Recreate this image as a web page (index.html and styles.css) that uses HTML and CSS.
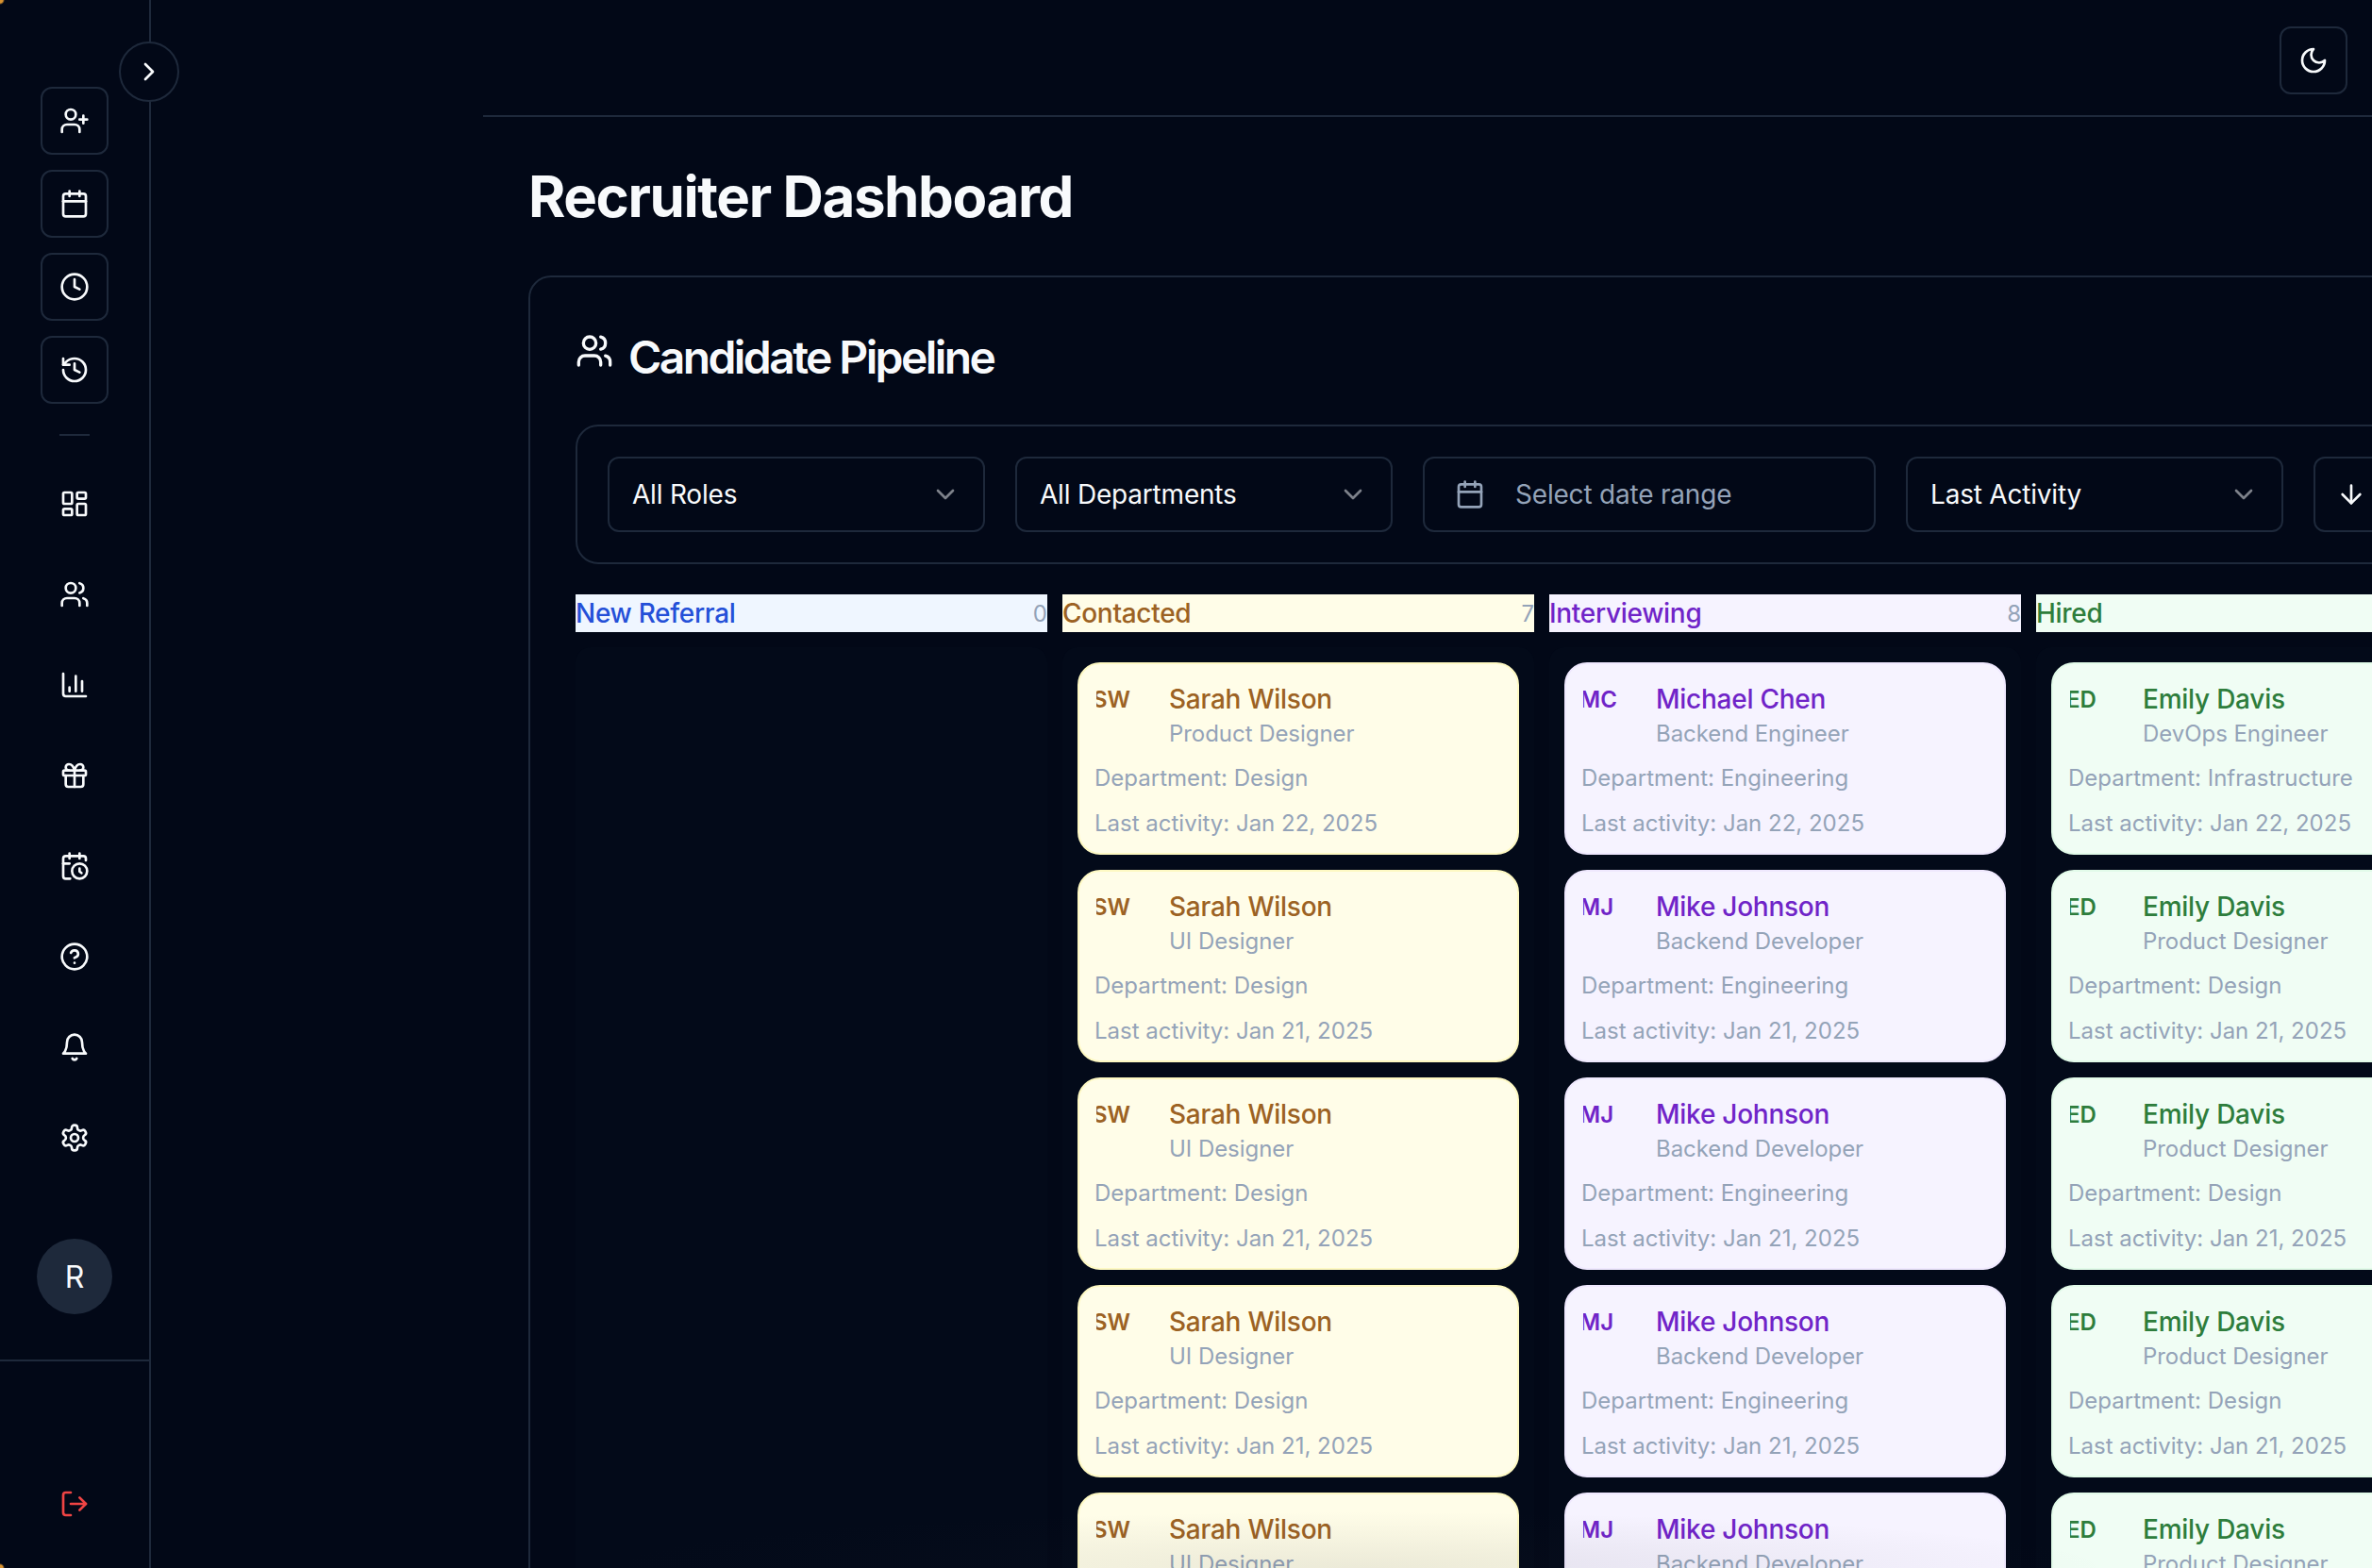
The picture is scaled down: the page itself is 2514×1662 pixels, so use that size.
FILE: index.html
```html
<!DOCTYPE html>
<html lang="en">
<head>
<meta charset="UTF-8">
<title>Recruiter Dashboard</title>
<link rel="stylesheet" href="styles.css">
</head>
<body>
<svg width="0" height="0" class="defs">
    <symbol id="users" viewBox="0 0 24 24"><path d="M16 21v-2a4 4 0 0 0-4-4H6a4 4 0 0 0-4 4v2"/><circle cx="9" cy="7" r="4"/><path d="M22 21v-2a4 4 0 0 0-3-3.87"/><path d="M16 3.13a4 4 0 0 1 0 7.75"/></symbol>
    <symbol id="calendar" viewBox="0 0 24 24"><path d="M8 2v4"/><path d="M16 2v4"/><rect x="3" y="4" width="18" height="18" rx="2"/><path d="M3 10h18"/></symbol>
    <symbol id="chevron-down" viewBox="0 0 24 24"><path d="m6 9 6 6 6-6"/></symbol>
</svg>

<aside class="sidebar">
    <button class="toggle"><svg class="icon" viewBox="0 0 24 24"><path d="m9 18 6-6-6-6"/></svg></button>
    <div class="quick-actions">
        <button class="square-btn"><svg class="icon" viewBox="0 0 24 24"><path d="M16 21v-2a4 4 0 0 0-4-4H6a4 4 0 0 0-4 4v2"/><circle cx="9" cy="7" r="4"/><path d="M19 8v6"/><path d="M22 11h-6"/></svg></button>
        <button class="square-btn"><svg class="icon"><use href="#calendar"/></svg></button>
        <button class="square-btn"><svg class="icon" viewBox="0 0 24 24"><circle cx="12" cy="12" r="10"/><path d="M12 6v6l4 2"/></svg></button>
        <button class="square-btn"><svg class="icon" viewBox="0 0 24 24"><path d="M3 12a9 9 0 1 0 9-9 9.75 9.75 0 0 0-6.74 2.74L3 8"/><path d="M3 3v5h5"/><path d="M12 7v5l4 2"/></svg></button>
    </div>
    <div class="side-divider"></div>
    <nav class="side-nav">
        <svg class="icon" viewBox="0 0 24 24"><rect x="3" y="3" width="7" height="9" rx="1"/><rect x="14" y="3" width="7" height="5" rx="1"/><rect x="14" y="12" width="7" height="9" rx="1"/><rect x="3" y="16" width="7" height="5" rx="1"/></svg>
        <svg class="icon"><use href="#users"/></svg>
        <svg class="icon" viewBox="0 0 24 24"><path d="M3 3v16a2 2 0 0 0 2 2h16"/><path d="M18 17V9"/><path d="M13 17V5"/><path d="M8 17v-3"/></svg>
        <svg class="icon" viewBox="0 0 24 24"><rect x="3" y="8" width="18" height="4" rx="1"/><path d="M12 8v13"/><path d="M19 12v7a2 2 0 0 1-2 2H7a2 2 0 0 1-2-2v-7"/><path d="M7.5 8a2.5 2.5 0 0 1 0-5A4.8 8 0 0 1 12 8a4.8 8 0 0 1 4.5-5 2.5 2.5 0 0 1 0 5"/></svg>
        <svg class="icon" viewBox="0 0 24 24"><path d="M21 7.5V6a2 2 0 0 0-2-2H5a2 2 0 0 0-2 2v14a2 2 0 0 0 2 2h3.5"/><path d="M16 2v4"/><path d="M8 2v4"/><path d="M3 10h5"/><path d="M17.5 17.5 16 16.3V14"/><circle cx="16" cy="16" r="6"/></svg>
        <svg class="icon" viewBox="0 0 24 24"><circle cx="12" cy="12" r="10"/><path d="M9.09 9a3 3 0 0 1 5.83 1c0 2-3 3-3 3"/><path d="M12 17h.01"/></svg>
        <svg class="icon" viewBox="0 0 24 24"><path d="M6 8a6 6 0 0 1 12 0c0 7 3 9 3 9H3s3-2 3-9"/><path d="M10.3 21a1.94 1.94 0 0 0 3.4 0"/></svg>
        <svg class="icon" viewBox="0 0 24 24"><path d="M12.22 2h-.44a2 2 0 0 0-2 2v.18a2 2 0 0 1-1 1.73l-.43.25a2 2 0 0 1-2 0l-.15-.08a2 2 0 0 0-2.73.73l-.22.38a2 2 0 0 0 .73 2.73l.15.1a2 2 0 0 1 1 1.72v.51a2 2 0 0 1-1 1.74l-.15.09a2 2 0 0 0-.73 2.73l.22.38a2 2 0 0 0 2.73.73l.15-.08a2 2 0 0 1 2 0l.43.25a2 2 0 0 1 1 1.73V20a2 2 0 0 0 2 2h.44a2 2 0 0 0 2-2v-.18a2 2 0 0 1 1-1.73l.43-.25a2 2 0 0 1 2 0l.15.08a2 2 0 0 0 2.73-.73l.22-.39a2 2 0 0 0-.73-2.73l-.15-.08a2 2 0 0 1-1-1.74v-.5a2 2 0 0 1 1-1.74l.15-.09a2 2 0 0 0 .73-2.73l-.22-.38a2 2 0 0 0-2.73-.73l-.15.08a2 2 0 0 1-2 0l-.43-.25a2 2 0 0 1-1-1.73V4a2 2 0 0 0-2-2z"/><circle cx="12" cy="12" r="3"/></svg>
    </nav>
    <div class="profile">R</div>
    <div class="logout">
        <svg class="icon icon-red" viewBox="0 0 24 24"><path d="M9 21H5a2 2 0 0 1-2-2V5a2 2 0 0 1 2-2h4"/><path d="m16 17 5-5-5-5"/><path d="M21 12H9"/></svg>
    </div>
</aside>

<div class="main">
    <header class="topbar">
        <button class="square-btn"><svg class="icon" viewBox="0 0 24 24"><path d="M12 3a6 6 0 0 0 9 9 9 9 0 1 1-9-9Z"/></svg></button>
    </header>
    <main class="content">
        <h1>Recruiter Dashboard</h1>
        <section class="panel">
            <h2><svg class="icon-title"><use href="#users"/></svg>Candidate Pipeline</h2>

            <div class="filters">
                <div class="field w-select"><span>All Roles</span><svg class="icon chev"><use href="#chevron-down"/></svg></div>
                <div class="field w-select"><span>All Departments</span><svg class="icon chev"><use href="#chevron-down"/></svg></div>
                <div class="field w-date"><svg class="icon muted"><use href="#calendar"/></svg><span class="muted">Select date range</span></div>
                <div class="field w-select"><span>Last Activity</span><svg class="icon chev"><use href="#chevron-down"/></svg></div>
                <div class="field w-sort"><svg class="icon" viewBox="0 0 24 24"><path d="M12 5v14"/><path d="m19 12-7 7-7-7"/></svg></div>
            </div>

            <div class="board" id="board"></div>
        </section>
    </main>
</div>
<div class="bottom-fade"></div>

<script>
    var columns = [
        { name: 'New Referral', count: 0, tone: 'blue', cards: [] },
        { name: 'Contacted', count: 7, tone: 'yellow', cards: [
            ['SW', 'Sarah Wilson', 'Product Designer', 'Design', 'Jan 22, 2025'],
            ['SW', 'Sarah Wilson', 'UI Designer', 'Design', 'Jan 21, 2025'],
            ['SW', 'Sarah Wilson', 'UI Designer', 'Design', 'Jan 21, 2025'],
            ['SW', 'Sarah Wilson', 'UI Designer', 'Design', 'Jan 21, 2025'],
            ['SW', 'Sarah Wilson', 'UI Designer', 'Design', 'Jan 21, 2025']
        ] },
        { name: 'Interviewing', count: 8, tone: 'purple', cards: [
            ['MC', 'Michael Chen', 'Backend Engineer', 'Engineering', 'Jan 22, 2025'],
            ['MJ', 'Mike Johnson', 'Backend Developer', 'Engineering', 'Jan 21, 2025'],
            ['MJ', 'Mike Johnson', 'Backend Developer', 'Engineering', 'Jan 21, 2025'],
            ['MJ', 'Mike Johnson', 'Backend Developer', 'Engineering', 'Jan 21, 2025'],
            ['MJ', 'Mike Johnson', 'Backend Developer', 'Engineering', 'Jan 21, 2025']
        ] },
        { name: 'Hired', count: 6, tone: 'green', cards: [
            ['ED', 'Emily Davis', 'DevOps Engineer', 'Infrastructure', 'Jan 22, 2025'],
            ['ED', 'Emily Davis', 'Product Designer', 'Design', 'Jan 21, 2025'],
            ['ED', 'Emily Davis', 'Product Designer', 'Design', 'Jan 21, 2025'],
            ['ED', 'Emily Davis', 'Product Designer', 'Design', 'Jan 21, 2025'],
            ['ED', 'Emily Davis', 'Product Designer', 'Design', 'Jan 21, 2025']
        ] }
    ];

    var board = document.getElementById('board');
    columns.forEach(function (col) {
        var html = '<div class="column ' + col.tone + '">';
        html += '<div class="column-head"><span>' + col.name + '</span><span class="count">' + col.count + '</span></div>';
        html += '<div class="column-body">';
        col.cards.forEach(function (c) {
            html += '<div class="card"><div class="card-top">' +
                '<div class="initials"><span>' + c[0] + '</span></div>' +
                '<div><div class="name">' + c[1] + '</div><div class="role">' + c[2] + '</div></div></div>' +
                '<div class="meta">Department: ' + c[3] + '</div>' +
                '<div class="meta">Last activity: ' + c[4] + '</div></div>';
        });
        html += '</div></div>';
        board.innerHTML += html;
    });
</script>
</body>
</html>
```

FILE: styles.css
```css
* {
    box-sizing: border-box;
}
html, body {
    margin: 0;
    height: 100%;
    overflow: hidden;
}
body {
    display: flex;
    font-family: Inter, "Liberation Sans", sans-serif;
    background-color: #020817;
    color: #f8fafc;
}
button {
    padding: 0;
    background: none;
    color: inherit;
    font: inherit;
}
.defs {
    position: absolute;
}
.icon {
    width: 32px;
    height: 32px;
    flex: none;
    fill: none;
    stroke: currentColor;
    stroke-width: 2;
    stroke-linecap: round;
    stroke-linejoin: round;
}
symbol {
    overflow: visible;
}
.icon-red {
    color: #ef4444;
}
.muted {
    color: #94a3b8;
}

/* sidebar */
.sidebar {
    position: relative;
    width: 160px;
    flex: none;
    height: 100%;
    padding-top: 92px;
    display: flex;
    flex-direction: column;
    align-items: center;
    border-right: 2px solid #1e293b;
    background-image:
        radial-gradient(circle at 0 0, #d8922f 3px, transparent 5px),
        radial-gradient(circle at 0 100%, #d8922f 3px, transparent 5px);
}
.toggle {
    position: absolute;
    top: 44px;
    left: 126px;
    width: 64px;
    height: 64px;
    display: flex;
    align-items: center;
    justify-content: center;
    border: 2px solid #1e293b;
    border-radius: 50%;
    background-color: #020817;
}
.quick-actions {
    display: flex;
    flex-direction: column;
    gap: 16px;
}
.square-btn {
    width: 72px;
    height: 72px;
    display: flex;
    align-items: center;
    justify-content: center;
    border: 2px solid #1e293b;
    border-radius: 12px;
}
.side-divider {
    width: 32px;
    height: 2px;
    margin-top: 32px;
    background-color: #1e293b;
}
.side-nav {
    display: flex;
    flex-direction: column;
    align-items: center;
    gap: 64px;
    margin-top: 56px;
}
.profile {
    width: 80px;
    height: 80px;
    margin-top: 91px;
    display: flex;
    align-items: center;
    justify-content: center;
    border-radius: 50%;
    background-color: #1e293b;
    font-size: 32px;
}
.logout {
    width: 100%;
    margin-top: 48px;
    padding-top: 135px;
    display: flex;
    justify-content: center;
    border-top: 2px solid #1e293b;
}

/* main area */
.main {
    flex: 1;
    min-width: 0;
    margin-left: 352px;
    overflow: hidden;
}
.topbar {
    height: 124px;
    padding: 28px 26px 0 0;
    display: flex;
    justify-content: flex-end;
    border-bottom: 2px solid #1e293b;
}
.content {
    padding: 48px;
}
h1 {
    margin: 0 0 48px;
    font-size: 60px;
    line-height: 72px;
    font-weight: 700;
    letter-spacing: -1.4px;
}
.panel {
    width: 2400px;
    padding: 48px;
    border: 2px solid #1e293b;
    border-radius: 24px;
}
h2 {
    margin: 0 0 34px;
    display: flex;
    align-items: center;
    gap: 16px;
    font-size: 48px;
    line-height: 74px;
    font-weight: 600;
    letter-spacing: -2.6px;
}
.icon-title {
    width: 40px;
    height: 40px;
    margin-top: -15px;
    fill: none;
    stroke: currentColor;
    stroke-width: 2;
    stroke-linecap: round;
    stroke-linejoin: round;
}
.filters {
    display: flex;
    gap: 32px;
    padding: 32px;
    border: 2px solid #1e293b;
    border-radius: 24px;
}
.field {
    height: 80px;
    padding: 0 24px;
    display: flex;
    flex: none;
    align-items: center;
    justify-content: space-between;
    border: 2px solid #1e293b;
    border-radius: 12px;
    font-size: 28px;
    letter-spacing: -0.2px;
}
.w-select {
    width: 400px;
}
.w-date {
    width: 480px;
    padding: 0 32px;
    justify-content: flex-start;
    gap: 32px;
}
.w-sort {
    width: 80px;
    justify-content: center;
    padding: 0;
}
.chev {
    opacity: 0.5;
}

/* board */
.board {
    display: flex;
    gap: 16px;
    margin-top: 32px;
}
.column {
    width: 500px;
    flex: none;
}
.column-head {
    height: 40px;
    display: flex;
    align-items: center;
    justify-content: space-between;
    font-size: 28px;
    font-weight: 500;
    letter-spacing: -0.3px;
}
.count {
    font-size: 24px;
    font-weight: 400;
    letter-spacing: 0;
    color: #94a3b8;
}
.column-body {
    margin-top: 16px;
    padding: 16px;
    display: flex;
    flex-direction: column;
    gap: 16px;
    min-height: 1000px;
    border-radius: 16px;
    background-color: #030a19;
}
.card {
    height: 204px;
    padding: 15px 16px;
    border: 2px solid;
    border-radius: 24px;
}
.card-top {
    display: flex;
    height: 81px;
}
.initials {
    width: 32px;
    height: 44px;
    margin: 0 45px 0 2px;
    display: flex;
    flex: none;
    align-items: center;
    clip-path: inset(0 -12px 0 0);
    font-size: 24px;
    font-weight: 600;
    white-space: nowrap;
}
.initials span {
    margin-left: -4px;
}
.name {
    font-size: 28px;
    line-height: 44px;
    font-weight: 500;
    letter-spacing: -0.25px;
}
.role {
    margin-top: -1px;
    font-size: 24px;
    line-height: 32px;
    letter-spacing: -0.05px;
    color: #94a3b8;
}
.meta {
    height: 48px;
    display: flex;
    align-items: center;
    font-size: 24px;
    color: #94a3b8;
    white-space: nowrap;
}

.blue .column-head { background-color: #eff6ff; color: #2450d8; }
.yellow .column-head { background-color: #fffde8; color: #9c6223; }
.purple .column-head { background-color: #f6f3ff; color: #7024c8; }
.green .column-head { background-color: #f0fdf4; color: #2e7d3c; }

.yellow .card { background-color: #fffde8; border-color: #fef9c3; }
.yellow .name, .yellow .initials { color: #9c6223; }
.purple .card { background-color: #f6f3ff; border-color: #efe8fe; }
.purple .name, .purple .initials { color: #7024c8; }
.green .card { background-color: #f0fdf4; border-color: #e2fbe9; }
.green .name, .green .initials { color: #2e7d3c; }

/* soft shadow that lies over the last row of cards */
.bottom-fade {
    position: absolute;
    left: 0;
    right: 0;
    bottom: 0;
    height: 60px;
    pointer-events: none;
    background: radial-gradient(ellipse 800px 60px at 1440px 100%, rgba(40, 40, 50, 0.09), rgba(40, 40, 50, 0));
}
```
